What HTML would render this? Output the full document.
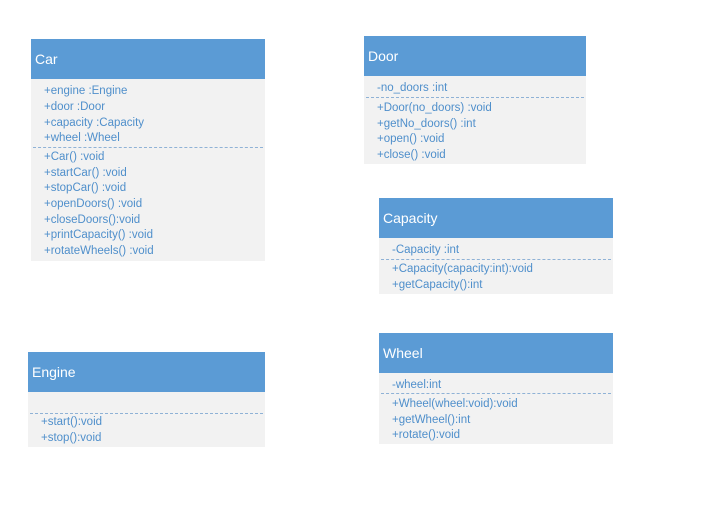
<!DOCTYPE html>
<html><head><meta charset="utf-8"><style>
body{margin:0;width:720px;height:530px;background:#fff;position:relative;overflow:hidden;font-family:"Liberation Sans",sans-serif}
.h{position:absolute;background:#5b9bd5;color:#fff;font-size:14px;box-sizing:border-box;padding-left:4px;display:flex;align-items:center}
.b{position:absolute;background:#f2f2f2}
.t{position:absolute;color:#4f8fcb;font-size:11.5px;line-height:12px;white-space:nowrap;margin-top:1px}
.s{position:absolute;height:0;border-top:1px dashed #8fb2d6}
</style></head><body>
<!-- Car -->
<div class="h" style="left:31px;top:39px;width:234px;height:40px">Car</div>
<div class="b" style="left:31px;top:79px;width:234px;height:182px"></div>
<div class="t" style="left:44px;top:84px">+engine :Engine</div>
<div class="t" style="left:44px;top:100px">+door :Door</div>
<div class="t" style="left:44px;top:116px">+capacity :Capacity</div>
<div class="t" style="left:44px;top:131px">+wheel :Wheel</div>
<div class="s" style="left:33px;top:147px;width:230px"></div>
<div class="t" style="left:44px;top:150px">+Car() :void</div>
<div class="t" style="left:44px;top:166px">+startCar() :void</div>
<div class="t" style="left:44px;top:181px">+stopCar() :void</div>
<div class="t" style="left:44px;top:197px">+openDoors() :void</div>
<div class="t" style="left:44px;top:213px">+closeDoors():void</div>
<div class="t" style="left:44px;top:228px">+printCapacity() :void</div>
<div class="t" style="left:44px;top:244px">+rotateWheels() :void</div>
<!-- Door -->
<div class="h" style="left:364px;top:36px;width:222px;height:40px">Door</div>
<div class="b" style="left:364px;top:76px;width:222px;height:88px"></div>
<div class="t" style="left:377px;top:81px">-no_doors :int</div>
<div class="s" style="left:366px;top:97px;width:218px"></div>
<div class="t" style="left:377px;top:101px">+Door(no_doors) :void</div>
<div class="t" style="left:377px;top:117px">+getNo_doors() :int</div>
<div class="t" style="left:377px;top:132px">+open() :void</div>
<div class="t" style="left:377px;top:148px">+close() :void</div>
<!-- Capacity -->
<div class="h" style="left:379px;top:198px;width:234px;height:40px">Capacity</div>
<div class="b" style="left:379px;top:238px;width:234px;height:56px"></div>
<div class="t" style="left:392px;top:243px">-Capacity :int</div>
<div class="s" style="left:381px;top:259px;width:230px"></div>
<div class="t" style="left:392px;top:262px">+Capacity(capacity:int):void</div>
<div class="t" style="left:392px;top:278px">+getCapacity():int</div>
<!-- Engine -->
<div class="h" style="left:28px;top:352px;width:237px;height:40px">Engine</div>
<div class="b" style="left:28px;top:392px;width:237px;height:55px"></div>
<div class="s" style="left:30px;top:413px;width:233px"></div>
<div class="t" style="left:41px;top:415px">+start():void</div>
<div class="t" style="left:41px;top:431px">+stop():void</div>
<!-- Wheel -->
<div class="h" style="left:379px;top:333px;width:234px;height:40px">Wheel</div>
<div class="b" style="left:379px;top:373px;width:234px;height:71px"></div>
<div class="t" style="left:392px;top:378px">-wheel:int</div>
<div class="s" style="left:381px;top:393px;width:230px"></div>
<div class="t" style="left:392px;top:397px">+Wheel(wheel:void):void</div>
<div class="t" style="left:392px;top:413px">+getWheel():int</div>
<div class="t" style="left:392px;top:428px">+rotate():void</div>
</body></html>
